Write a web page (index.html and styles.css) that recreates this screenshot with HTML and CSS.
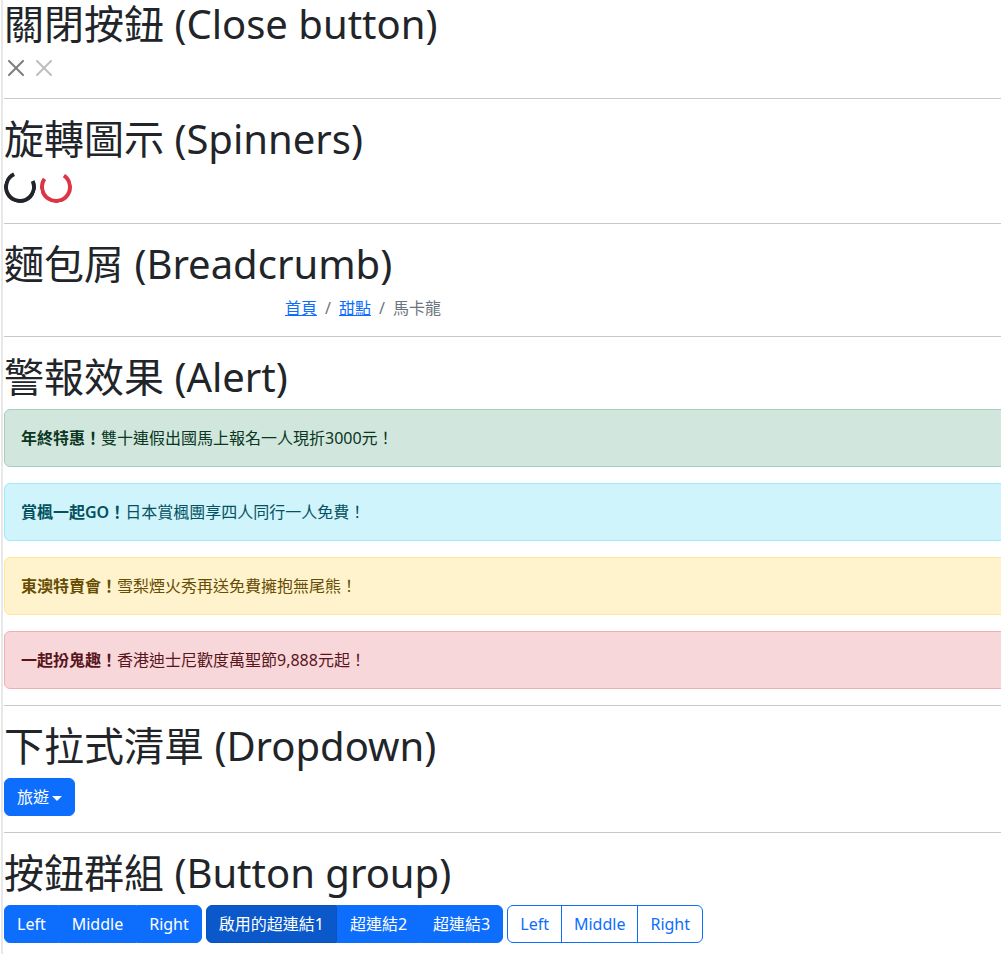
FILE: index.html
```html
<!DOCTYPE html>
<html lang="zh-Hant">
<head>
<meta charset="utf-8">
<title>Bootstrap 元件</title>
<link rel="stylesheet" href="styles.css">
</head>
<body>
<main class="page">
  <section class="block">
    <h1 class="title">關閉按鈕 (Close button)</h1>
    <div class="row-inline">
      <button class="btn-close" type="button" aria-label="Close"><svg viewBox="0 0 16 16" width="16" height="16"><path d="M.293.293a1 1 0 0 1 1.414 0L8 6.586 14.293.293a1 1 0 1 1 1.414 1.414L9.414 8l6.293 6.293a1 1 0 0 1-1.414 1.414L8 9.414l-6.293 6.293a1 1 0 0 1-1.414-1.414L6.586 8 .293 1.707a1 1 0 0 1 0-1.414z"/></svg></button>
      <button class="btn-close is-disabled" type="button" aria-label="Close" disabled><svg viewBox="0 0 16 16" width="16" height="16"><path d="M.293.293a1 1 0 0 1 1.414 0L8 6.586 14.293.293a1 1 0 1 1 1.414 1.414L9.414 8l6.293 6.293a1 1 0 0 1-1.414 1.414L8 9.414l-6.293 6.293a1 1 0 0 1-1.414-1.414L6.586 8 .293 1.707a1 1 0 0 1 0-1.414z"/></svg></button>
    </div>
  </section>
  <hr class="divider">
  <section class="block">
    <h1 class="title">旋轉圖示 (Spinners)</h1>
    <div class="spinners">
      <span class="spinner spinner-dark"></span><span class="spinner spinner-red"></span>
    </div>
  </section>
  <hr class="divider">
  <section class="block">
    <h1 class="title">麵包屑 (Breadcrumb)</h1>
    <nav class="crumb-nav" aria-label="breadcrumb">
      <ol class="breadcrumb">
        <li class="crumb"><a href="#">首頁</a></li>
        <li class="crumb"><a href="#">甜點</a></li>
        <li class="crumb active">馬卡龍</li>
      </ol>
    </nav>
  </section>
  <hr class="divider">
  <section class="block">
    <h1 class="title">警報效果 (Alert)</h1>
    <div class="alert alert-success"><strong>年終特惠！</strong>雙十連假出國馬上報名一人現折3000元！</div>
    <div class="alert alert-info"><strong>賞楓一起GO！</strong>日本賞楓團享四人同行一人免費！</div>
    <div class="alert alert-warning"><strong>東澳特賣會！</strong>雪梨煙火秀再送免費擁抱無尾熊！</div>
    <div class="alert alert-danger"><strong>一起扮鬼趣！</strong>香港迪士尼歡度萬聖節9,888元起！</div>
  </section>
  <hr class="divider">
  <section class="block">
    <h1 class="title">下拉式清單 (Dropdown)</h1>
    <button class="btn btn-primary dropdown-toggle" type="button">旅遊</button>
  </section>
  <hr class="divider">
  <section class="block">
    <h1 class="title">按鈕群組 (Button group)</h1>
    <div class="groups">
      <div class="btn-group">
        <button class="btn btn-primary" type="button">Left</button>
        <button class="btn btn-primary" type="button">Middle</button>
        <button class="btn btn-primary" type="button">Right</button>
      </div>
      <div class="btn-group">
        <a class="btn btn-primary active" href="#">啟用的超連結1</a>
        <a class="btn btn-primary" href="#">超連結2</a>
        <a class="btn btn-primary" href="#">超連結3</a>
      </div>
      <div class="btn-group">
        <button class="btn btn-outline" type="button">Left</button>
        <button class="btn btn-outline" type="button">Middle</button>
        <button class="btn btn-outline" type="button">Right</button>
      </div>
    </div>
  </section>
</main>
</body>
</html>
```

FILE: styles.css
```css
* { box-sizing: border-box; }

html { background: #fff; }

body {
  margin: 0 0 0 1px;
  padding-left: 1px;
  border-left: 2px solid #e8e8e8;
  font-family: "Noto Sans", "Noto Sans CJK TC", sans-serif;
  font-size: 16px;
  line-height: 1.5;
  color: #212529;
  overflow-x: hidden;
  min-height: 954px;
}

.page {
  width: 1020px;
}

.title {
  margin: 0 0 8px;
  font-size: 40px;
  font-weight: 400;
  line-height: 1.2;
}

.divider {
  margin: 16px 0;
  border: 0;
  border-top: 1px solid #c8c9ca;
  height: 0;
}

.row-inline {
  display: flex;
  gap: 4px;
  height: 26px;
}

.btn-close {
  width: 24px;
  height: 24px;
  padding: 4px;
  border: 0;
  background: transparent;
  opacity: .5;
  display: flex;
  align-items: center;
  justify-content: center;
}
.btn-close svg { display: block; fill: #000; }
.btn-close.is-disabled { opacity: .25; }

.spinners {
  display: flex;
  gap: 4px;
  height: 36px;
}
.spinner {
  display: block;
  width: 32px;
  height: 32px;
  border: 4px solid currentColor;
  border-top-color: transparent;
  border-radius: 50%;
}
.spinner-dark { color: #212529; transform: rotate(20deg); }
.spinner-red { color: #dc3545; transform: rotate(-10deg); }

.crumb-nav { padding-left: 281px; }
.breadcrumb {
  display: flex;
  list-style: none;
  margin: 0 0 16px;
  padding: 0;
  font-size: 16px;
  line-height: 24px;
}
.crumb + .crumb { padding-left: 8px; }
.crumb + .crumb::before {
  content: "/";
  color: #6c757d;
  padding-right: 8px;
}
.crumb a { color: #0d6efd; text-decoration: underline; }
.crumb.active { color: #6c757d; }

.alert {
  padding: 16px;
  margin-bottom: 16px;
  border: 1px solid transparent;
  border-radius: 6px;
  font-size: 16px;
  line-height: 24px;
}
.alert strong { font-weight: 600; }
.alert-success { background: #d1e7dd; border-color: #a3cfbb; color: #0a3622; }
.alert-info { background: #cff4fc; border-color: #9eeaf9; color: #055160; }
.alert-warning { background: #fff3cd; border-color: #ffe69c; color: #664d03; }
.alert-danger { background: #f8d7da; border-color: #f1aeb5; color: #58151c; }

.btn {
  display: inline-flex;
  align-items: center;
  height: 38px;
  padding: 0 12px;
  font-family: inherit;
  font-size: 16px;
  line-height: 24px;
  border: 1px solid transparent;
  border-radius: 6px;
  text-decoration: none;
  cursor: pointer;
}
.btn-primary { background: #0d6efd; border-color: #0d6efd; color: #fff; }
.btn-primary.active { background: #0a58ca; border-color: #0a53be; }
.btn-outline { background: #fff; border-color: #0d6efd; color: #0d6efd; }

.dropdown-toggle::after {
  content: "";
  display: inline-block;
  margin-left: 3px;
  margin-top: 2px;
  border-top: 5px solid currentColor;
  border-right: 5px solid transparent;
  border-left: 5px solid transparent;
}

.groups {
  display: flex;
  gap: 4px;
}
.btn-group { display: inline-flex; }
.btn-group .btn { border-radius: 0; }
.btn-group .btn:first-child { border-top-left-radius: 6px; border-bottom-left-radius: 6px; }
.btn-group .btn:last-child { border-top-right-radius: 6px; border-bottom-right-radius: 6px; }
.btn-group .btn-outline + .btn-outline { margin-left: -1px; }
```
